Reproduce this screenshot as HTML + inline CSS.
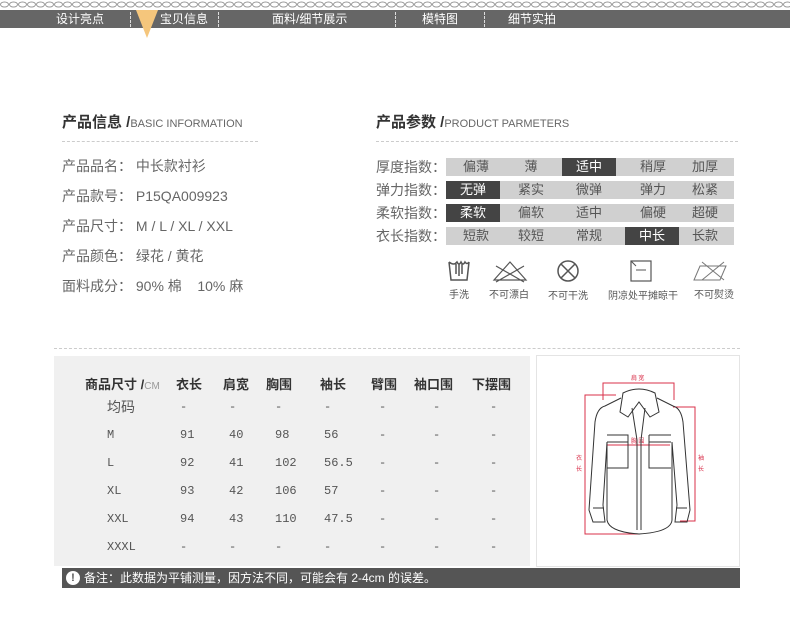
<!DOCTYPE html>
<html><head><meta charset="utf-8"><style>
*{margin:0;padding:0;box-sizing:border-box}
body{width:790px;height:623px;background:#fff;position:relative;overflow:hidden;font-family:"Liberation Sans","Noto Sans CJK SC",sans-serif;color:#666}
.a{position:absolute;white-space:nowrap}
.nav{position:absolute;left:0;top:10px;width:790px;height:18px;background:#666}
.nav span{position:absolute;top:0;line-height:18px;font-size:12px;color:#fff}
.sep{position:absolute;top:2px;height:15px;border-left:1px dashed #ddd}
.h{font-size:15px;font-weight:bold;color:#333}
.h small{font-size:11px;font-weight:normal;color:#666}
.dash{position:absolute;border-top:1px dashed #ccc;height:0}
.r{font-size:14px;color:#666;line-height:18px}
.bar{position:absolute;left:446px;width:288px;height:18px;background:#d0d0d0}
.bar span{position:absolute;top:0;height:18px;line-height:18px;font-size:13px;color:#555;width:54px;text-align:center}
.bar span.d{background:#444;color:#fff}
.ic{font-size:10px;color:#555}
.th{font-size:13px;font-weight:bold;color:#333;top:374px}
.td{font-family:"Liberation Mono","Noto Sans CJK SC",monospace;font-size:12px;color:#555;line-height:16px}
.col{line-height:28px}
</style></head><body>
<svg class="a" style="left:0;top:0" width="790" height="9"><defs><pattern id="c" width="9" height="9" patternUnits="userSpaceOnUse"><ellipse cx="4.5" cy="4.5" rx="4" ry="2.5" fill="none" stroke="#999" stroke-width="1"/></pattern></defs><rect width="790" height="9" fill="url(#c)"/></svg>
<div class="nav">
<span style="left:56px">设计亮点</span><div class="sep" style="left:130px"></div>
<span style="left:160px">宝贝信息</span><div class="sep" style="left:218px"></div>
<span style="left:272px">面料/细节展示</span><div class="sep" style="left:395px"></div>
<span style="left:422px">模特图</span><div class="sep" style="left:484px"></div>
<span style="left:508px">细节实拍</span>
</div>
<svg class="a" style="left:136px;top:10px" width="24" height="30"><polygon points="0,0 22,0 11,28" fill="#f5c67c"/></svg>

<div class="a h" style="left:62px;top:111px">产品信息 /<small>BASIC INFORMATION</small></div>
<div class="dash" style="left:62px;top:141px;width:196px"></div>
<div class="a r" style="left:62px;top:157px">产品品名：&nbsp;中长款衬衫</div>
<div class="a r" style="left:62px;top:187px">产品款号：&nbsp;P15QA009923</div>
<div class="a r" style="left:62px;top:217px">产品尺寸：&nbsp;M / L / XL / XXL</div>
<div class="a r" style="left:62px;top:247px">产品颜色：&nbsp;绿花 / 黄花</div>
<div class="a r" style="left:62px;top:277px">面料成分：&nbsp;90% 棉&nbsp;&nbsp;&nbsp;&nbsp;10% 麻</div>

<div class="a h" style="left:376px;top:111px">产品参数 /<small>PRODUCT PARMETERS</small></div>
<div class="dash" style="left:376px;top:141px;width:362px"></div>
<div class="a r" style="left:376px;top:158px">厚度指数：</div>
<div class="a r" style="left:376px;top:181px">弹力指数：</div>
<div class="a r" style="left:376px;top:204px">柔软指数：</div>
<div class="a r" style="left:376px;top:227px">衣长指数：</div>
<div class="bar" style="top:158px"><span style="left:3px">偏薄</span><span style="left:58px">薄</span><span class="d" style="left:116px">适中</span><span style="left:180px">稍厚</span><span style="left:232px">加厚</span></div>
<div class="bar" style="top:181px"><span class="d" style="left:0">无弹</span><span style="left:58px">紧实</span><span style="left:116px">微弹</span><span style="left:180px">弹力</span><span style="left:232px">松紧</span></div>
<div class="bar" style="top:204px"><span class="d" style="left:0">柔软</span><span style="left:58px">偏软</span><span style="left:116px">适中</span><span style="left:180px">偏硬</span><span style="left:232px">超硬</span></div>
<div class="bar" style="top:227px"><span style="left:3px">短款</span><span style="left:58px">较短</span><span style="left:116px">常规</span><span class="d" style="left:179px">中长</span><span style="left:232px">长款</span></div>

<svg class="a" style="left:440px;top:258px" width="300" height="28" fill="none" stroke="#555" stroke-width="1.5">
<path d="M9 4 L11 22 L27 22 L29 4 M9 4 q5 4 8 0 q2 4 4 0 q2 4 4 0 q2 3 4 0 M16 6 v10 M19 6 v12 M22 6 v10"/>
<path d="M54 22 L70 4 L86 22 Z M56 8 L84 24 M84 8 L56 24" stroke-width="1.2"/>
<circle cx="128" cy="13" r="10"/><path d="M121 6 L135 20 M135 6 L121 20"/>
<rect x="191" y="3" width="20" height="20" stroke-width="1.2"/><path d="M196 12 h10 M191 3 l5 5" stroke-width="1"/>
<path d="M260 8 h26 l-6 14 h-26 Z M262 4 L284 22 M284 4 L262 22" stroke-width="1" stroke="#777"/>
</svg>
<div class="a ic" style="left:449px;top:286px">手洗</div>
<div class="a ic" style="left:489px;top:286px">不可漂白</div>
<div class="a ic" style="left:548px;top:287px">不可干洗</div>
<div class="a ic" style="left:608px;top:287px">阴凉处平摊晾干</div>
<div class="a ic" style="left:694px;top:286px">不可熨烫</div>

<div class="dash" style="left:54px;top:348px;width:686px"></div>
<div class="a" style="left:54px;top:356px;width:476px;height:210px;background:#f0f0f0"></div>
<div class="a" style="left:536px;top:355px;width:204px;height:212px;border:1px solid #e4e4e4;background:#fff"></div>
<div class="a th" style="left:85px">商品尺寸 /<span style="font-size:10px;font-weight:normal;color:#999">CM</span></div>
<div class="a th" style="left:176px">衣长</div><div class="a th" style="left:223px">肩宽</div><div class="a th" style="left:266px">胸围</div><div class="a th" style="left:320px">袖长</div><div class="a th" style="left:371px">臂围</div><div class="a th" style="left:414px">袖口围</div><div class="a th" style="left:472px">下摆围</div>
<div class="a" style="left:107px;top:398px;font-size:14px;color:#555;line-height:18px">均码</div>
<div class="a td" style="left:107px;top:427px">M</div>
<div class="a td" style="left:107px;top:455px">L</div>
<div class="a td" style="left:107px;top:483px">XL</div>
<div class="a td" style="left:107px;top:511px">XXL</div>
<div class="a td" style="left:107px;top:539px">XXXL</div>
<div class="a td col" style="left:180px;top:393px">-<br>91<br>92<br>93<br>94<br>-</div>
<div class="a td col" style="left:229px;top:393px">-<br>40<br>41<br>42<br>43<br>-</div>
<div class="a td col" style="left:275px;top:393px">-<br>98<br>102<br>106<br>110<br>-</div>
<div class="a td col" style="left:324px;top:393px">-<br>56<br>56.5<br>57<br>47.5<br>-</div>
<div class="a td col" style="left:379px;top:393px">-<br>-<br>-<br>-<br>-<br>-</div>
<div class="a td col" style="left:433px;top:393px">-<br>-<br>-<br>-<br>-<br>-</div>
<div class="a td col" style="left:490px;top:393px">-<br>-<br>-<br>-<br>-<br>-</div>

<svg class="a" style="left:535px;top:350px" width="210" height="220" fill="none" stroke="#333" stroke-width="1">
<g stroke="#d9304a" stroke-width="1"><path d="M68 50 V33 H139 V50"/><path d="M81 45 H50 V184 H105"/><path d="M138 57 H160 V171 H145"/><path d="M72 95 H135"/></g>
<g fill="#d9304a" stroke="none" font-size="6" font-family="Noto Sans CJK SC,sans-serif"><text x="96" y="30">肩 宽</text><text x="96" y="93">胸 围</text><text x="41" y="110">衣</text><text x="41" y="121">长</text><text x="163" y="110">袖</text><text x="163" y="121">长</text></g>
<path d="M88 43 Q104 35 120 43 L124 62 L115 67 L104 52 L93 67 L85 62 Z"/>
<path d="M86 48 L70 56 Q62 58 60 72 L54 160 L58 172 L70 172 L68 155 L72 92 L72 170 Q74 182 104 184 Q136 182 137 170 L137 92 L142 155 L140 172 L152 172 L155 160 L148 72 Q146 58 138 56 L122 48"/>
<path d="M97 58 L102 90 V180 M110 58 L106 90 V180"/>
<path d="M72 85 H93 V118 H72 M72 92 H93"/>
<path d="M114 85 H136 M114 85 V118 H136 M114 92 H136"/>
<path d="M58 158 H69 M141 158 H152"/>
</svg>

<div class="a" style="left:62px;top:568px;width:678px;height:20px;background:#555"></div>
<div class="a" style="left:66px;top:571px;width:14px;height:14px;border-radius:50%;background:#fff;color:#555;font-size:11px;font-weight:bold;text-align:center;line-height:14px">!</div>
<div class="a" style="left:84px;top:570px;font-size:12px;color:#fff;line-height:16px">备注：此数据为平铺测量，因方法不同，可能会有 2-4cm 的误差。</div>
</body></html>
